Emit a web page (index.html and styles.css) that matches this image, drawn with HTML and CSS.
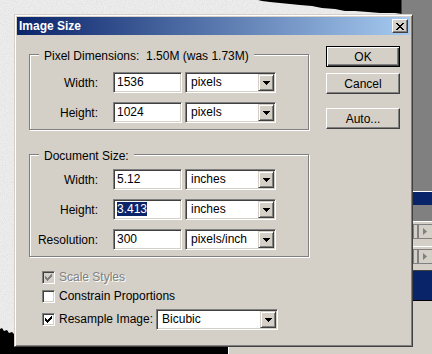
FILE: index.html
```html
<!DOCTYPE html>
<html lang="en">
<head>
  <meta charset="UTF-8" />
  <title>Image Size</title>
  <link rel="stylesheet" href="styles.css">
</head>
<body>
<div class="desktop">
  <svg class="backdrop" width="432" height="354" viewBox="0 0 432 354">
    <defs>
      <filter id="grain" x="0" y="0" width="100%" height="100%">
        <feTurbulence type="fractalNoise" baseFrequency="0.9" numOctaves="2" seed="3"/>
        <feColorMatrix type="matrix" values="0 0 0 0 0.55  0 0 0 0 0.55  0 0 0 0 0.55  0.6 0 0 0 -0.2"/>
      </filter>
    </defs>
    <rect width="432" height="354" fill="#eeeeee"/>
    <rect width="432" height="354" filter="url(#grain)"/>
    <path d="M258 0 L402 0 L402 14 L395 13 L380 13 L368 12 L355 11 L345 11 L335 9 L322 8 L312 6 L300 5 L290 4 L280 3 L270 2 L262 1 Z" fill="#000"/>
    <path d="M0 329 L2 328 L4 331 L7 330 L9 333 L12 332 L15 335 L15 354 L0 354 Z" fill="#000"/>
    <rect x="0" y="334" width="229" height="20" fill="#000"/>
    <rect x="401" y="0" width="31" height="191" fill="#808080"/>
    <rect x="401" y="0" width="1" height="14" fill="#404040"/>
    <rect x="401" y="191" width="31" height="1" fill="#fff"/>
    <rect x="401" y="192" width="31" height="13" fill="#0a246a"/>
    <rect x="401" y="205" width="31" height="16" fill="#808080"/>
    <rect x="401" y="221" width="31" height="1" fill="#fff"/>
    <rect x="401" y="222" width="31" height="24" fill="#d4d0c8"/>
    <rect x="401" y="246" width="31" height="1" fill="#fff"/>
    <rect x="401" y="247" width="31" height="23" fill="#d4d0c8"/>
    <rect x="413.5" y="224.5" width="4" height="14" fill="none" stroke="#808080"/>
    <rect x="418.5" y="224.5" width="14" height="14" fill="none" stroke="#808080"/>
    <path d="M423 228 L423 235 L427 231.5 Z" fill="#808080"/>
    <rect x="413.5" y="249.5" width="4" height="14" fill="none" stroke="#808080"/>
    <rect x="418.5" y="249.5" width="14" height="14" fill="none" stroke="#808080"/>
    <path d="M423 253 L423 260 L427 256.5 Z" fill="#808080"/>
    <rect x="401" y="270" width="31" height="1" fill="#404040"/>
    <rect x="401" y="271" width="31" height="29" fill="#0a246a"/>
    <rect x="401" y="300" width="31" height="1" fill="#000"/>
    <rect x="228" y="301" width="204" height="53" fill="#d4d0c8"/>
    <rect x="228" y="301" width="1" height="53" fill="#fff"/>
  </svg>

  <div class="dialog">
    <div class="titlebar">
      <span class="title">Image Size</span>
      <button class="close">
        <svg width="8" height="7" viewBox="0 0 8 7"><path d="M0 0h2v1H0zM6 0h2v1H6zM1 1h2v1H1zM5 1h2v1H5zM2 2h4v1H2zM3 3h2v1H3zM2 4h4v1H2zM1 5h2v1H1zM5 5h2v1H5zM0 6h2v1H0zM6 6h2v1H6z" fill="#000"/></svg>
      </button>
    </div>

    <div class="dialog-body">
      <div class="left">
        <div class="group group-pixels">
          <div class="legend">Pixel Dimensions:&nbsp; 1.50M (was 1.73M)</div>
          <div class="row">
            <label>Width:</label>
            <div class="field">1536</div>
            <div class="select"><span>pixels</span><i class="drop"><svg width="7" height="4" viewBox="0 0 7 4"><path d="M0 0h7v1H0zM1 1h5v1H1zM2 2h3v1H2zM3 3h1v1H3z" fill="#000"/></svg></i></div>
          </div>
          <div class="row">
            <label>Height:</label>
            <div class="field">1024</div>
            <div class="select"><span>pixels</span><i class="drop"><svg width="7" height="4" viewBox="0 0 7 4"><path d="M0 0h7v1H0zM1 1h5v1H1zM2 2h3v1H2zM3 3h1v1H3z" fill="#000"/></svg></i></div>
          </div>
        </div>

        <div class="group group-doc">
          <div class="legend">Document Size:</div>
          <div class="row">
            <label>Width:</label>
            <div class="field">5.12</div>
            <div class="select"><span>inches</span><i class="drop"><svg width="7" height="4" viewBox="0 0 7 4"><path d="M0 0h7v1H0zM1 1h5v1H1zM2 2h3v1H2zM3 3h1v1H3z" fill="#000"/></svg></i></div>
          </div>
          <div class="row">
            <label>Height:</label>
            <div class="field"><span class="selected">3.413</span></div>
            <div class="select"><span>inches</span><i class="drop"><svg width="7" height="4" viewBox="0 0 7 4"><path d="M0 0h7v1H0zM1 1h5v1H1zM2 2h3v1H2zM3 3h1v1H3z" fill="#000"/></svg></i></div>
          </div>
          <div class="row">
            <label>Resolution:</label>
            <div class="field">300</div>
            <div class="select"><span>pixels/inch</span><i class="drop"><svg width="7" height="4" viewBox="0 0 7 4"><path d="M0 0h7v1H0zM1 1h5v1H1zM2 2h3v1H2zM3 3h1v1H3z" fill="#000"/></svg></i></div>
          </div>
        </div>

        <div class="checks">
          <div class="check-row disabled">
            <span class="box"><svg width="7" height="7" viewBox="0 0 7 7"><path d="M0 2h1v3H0zM1 3h1v3H1zM2 4h1v3H2zM3 3h1v3H3zM4 2h1v3H4zM5 1h1v3H5zM6 0h1v3H6z"/></svg></span>
            <span class="text">Scale Styles</span>
          </div>
          <div class="check-row">
            <span class="box"></span>
            <span class="text">Constrain Proportions</span>
          </div>
          <div class="check-row">
            <span class="box"><svg width="7" height="7" viewBox="0 0 7 7"><path d="M0 2h1v3H0zM1 3h1v3H1zM2 4h1v3H2zM3 3h1v3H3zM4 2h1v3H4zM5 1h1v3H5zM6 0h1v3H6z"/></svg></span>
            <span class="text">Resample Image:</span>
            <div class="select select-wide"><span>Bicubic</span><i class="drop"><svg width="7" height="4" viewBox="0 0 7 4"><path d="M0 0h7v1H0zM1 1h5v1H1zM2 2h3v1H2zM3 3h1v1H3z" fill="#000"/></svg></i></div>
          </div>
        </div>
      </div>

      <div class="buttons">
        <button class="btn default">OK</button>
        <button class="btn">Cancel</button>
        <button class="btn auto">Auto...</button>
      </div>
    </div>
  </div>
</div>
</body>
</html>
```

FILE: styles.css
```css
body {
  margin: 0;
  background-color: #eeeeee;
  font-family: 'Liberation Sans', Arial, sans-serif;
  font-size: 12px;
  color: #000;
  overflow: hidden;
}
.desktop {
  position: relative;
  width: 432px;
  height: 354px;
}
.backdrop {
  position: absolute;
  left: 0;
  top: 0;
}

/* window */
.dialog {
  position: absolute;
  left: 14px;
  top: 14px;
  width: 399px;
  height: 333px;
  box-sizing: border-box;
  padding: 2px;
  background-color: #d4d0c8;
  border: 1px solid;
  border-color: #d4d0c8 #404040 #404040 #d4d0c8;
  box-shadow: inset 1px 1px #fff, inset -1px -1px #808080;
}
.titlebar {
  display: flex;
  align-items: center;
  justify-content: space-between;
  height: 18px;
  padding: 0 2px;
  background: linear-gradient(to right, #0a246a, #a6caf0);
  color: #fff;
  font-weight: bold;
}
.close {
  display: flex;
  align-items: center;
  justify-content: center;
  width: 16px;
  height: 14px;
  padding: 0;
  background-color: #d4d0c8;
  border: 1px solid;
  border-color: #fff #404040 #404040 #fff;
  box-shadow: inset -1px -1px #808080;
}

.dialog-body {
  display: flex;
  padding-left: 12px;
}
.left {
  width: 280px;
  padding-top: 19px;
}

/* group boxes */
.group {
  position: relative;
  border: 1px solid #808080;
  box-shadow: inset 1px 1px #fff, 1px 1px #fff;
  display: flex;
  flex-direction: column;
  gap: 9px;
  padding: 17px 0 6px;
}
.group-doc {
  margin-top: 24px;
  padding-top: 14px;
}
.legend {
  position: absolute;
  left: 9px;
  top: -6px;
  padding: 0 5px;
  line-height: 14px;
  background-color: #d4d0c8;
  white-space: nowrap;
}
.row {
  display: flex;
  align-items: center;
  height: 21px;
}
.row label {
  width: 68px;
  margin-right: 15px;
  text-align: right;
}

/* sunken controls */
.field,
.select {
  box-sizing: border-box;
  height: 21px;
  background-color: #fff;
  border: 1px solid;
  border-color: #808080 #fff #fff #808080;
  box-shadow: inset 1px 1px #404040, inset -1px -1px #d4d0c8;
}
.field {
  width: 69px;
  padding-left: 3px;
  line-height: 19px;
}
.selected {
  background-color: #0a246a;
  color: #fff;
}
.select {
  display: flex;
  width: 91px;
  margin-left: 3px;
  padding: 1px;
}
.select span {
  flex: 1;
  padding-left: 4px;
  line-height: 17px;
}
.drop {
  display: flex;
  align-items: center;
  justify-content: center;
  width: 16px;
  height: 17px;
  box-sizing: border-box;
  background-color: #d4d0c8;
  border: 1px solid;
  border-color: #d4d0c8 #404040 #404040 #d4d0c8;
  box-shadow: inset 1px 1px #fff, inset -1px -1px #808080;
}
.select-wide {
  width: 122px;
}

/* checkboxes */
.checks {
  display: flex;
  flex-direction: column;
  gap: 6px;
  margin: 14px 0 0 13px;
}
.check-row {
  display: flex;
  align-items: center;
  min-height: 13px;
}
.box {
  display: flex;
  align-items: center;
  justify-content: center;
  width: 13px;
  height: 13px;
  box-sizing: border-box;
  background-color: #fff;
  border: 1px solid;
  border-color: #808080 #fff #fff #808080;
  box-shadow: inset 1px 1px #404040, inset -1px -1px #d4d0c8;
}
.box svg {
  fill: #000;
}
.check-row .text {
  margin-left: 4px;
  line-height: 13px;
}
.disabled .box {
  background-color: #d4d0c8;
}
.disabled .box svg {
  fill: #808080;
}
.disabled .text {
  color: #808080;
  text-shadow: 1px 1px #fff;
}

/* buttons */
.buttons {
  display: flex;
  flex-direction: column;
  gap: 6px;
  margin: 11px 0 0 17px;
}
.btn {
  width: 74px;
  height: 21px;
  padding: 0;
  font-family: 'Liberation Sans', Arial, sans-serif;
  font-size: 12px;
  color: #000;
  background-color: #d4d0c8;
  border: 1px solid;
  border-color: #fff #404040 #404040 #fff;
  box-shadow: inset -1px -1px #808080;
}
.btn.default {
  border-color: #000;
  box-shadow: inset 1px 1px #fff, inset -1px -1px #404040, inset -2px -2px #808080;
}
.btn.auto {
  margin-top: 8px;
}
```
